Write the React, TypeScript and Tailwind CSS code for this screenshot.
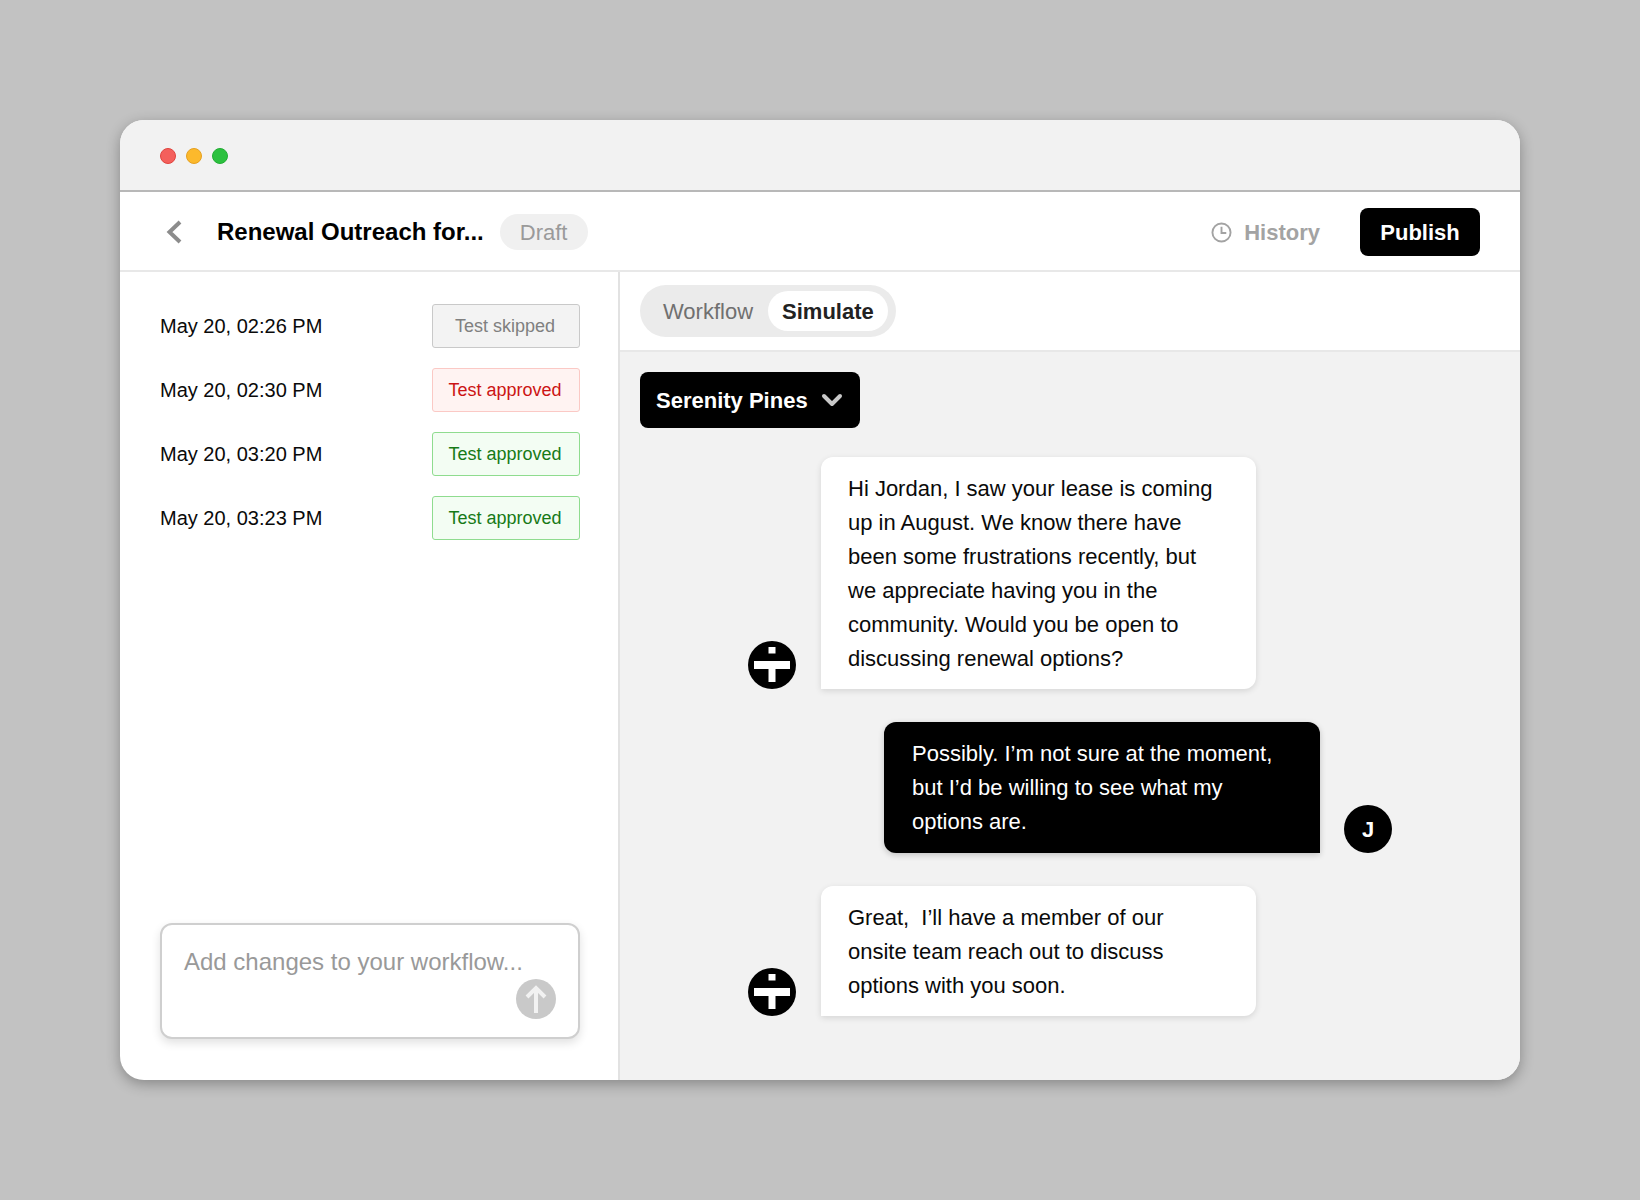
import { ChevronDown } from 'lucide-react'

const ROWS = [
  { time: 'May 20, 02:26 PM', label: 'Test skipped', cls: 'bg-[#f3f3f3] border-[#c9c9c9] text-[#808080]' },
  { time: 'May 20, 02:30 PM', label: 'Test approved', cls: 'bg-[#fff3f2] border-[#fbc9c5] text-[#cc1414]' },
  { time: 'May 20, 03:20 PM', label: 'Test approved', cls: 'bg-[#f3fdf3] border-[#8fdc8f] text-[#177a17]' },
  { time: 'May 20, 03:23 PM', label: 'Test approved', cls: 'bg-[#f3fdf3] border-[#8fdc8f] text-[#177a17]' },
]

function BotAvatar() {
  return (
    <svg width="48" height="48" viewBox="0 0 48 48" className="shrink-0">
      <circle cx="24" cy="24" r="24" fill="#000" />
      <rect x="20.5" y="6" width="7" height="6.5" fill="#fff" />
      <rect x="6" y="20" width="36" height="8" fill="#fff" />
      <rect x="20.5" y="20" width="7" height="21" fill="#fff" />
    </svg>
  )
}

function BotMessage({ lines }: { lines: string[] }) {
  return (
    <div className="flex items-end gap-[25px]">
      <BotAvatar />
      <div className="w-[435px] bg-white rounded-t-xl rounded-br-xl pl-[27px] pr-5 pt-[15px] pb-[13px] text-[22px] leading-[34px] text-[#0a0a0a] shadow-[0_2px_6px_rgba(0,0,0,0.12)]">
        {lines.map(l => <div key={l} className="whitespace-pre">{l}</div>)}
      </div>
    </div>
  )
}

export default function App() {
  return (
    <div className="h-screen bg-[#c2c2c2] flex items-center justify-center [font-family:'Liberation_Sans',Arial,sans-serif]">
      <div className="w-[1400px] h-[960px] bg-white rounded-3xl overflow-hidden flex flex-col shadow-[0_4px_14px_rgba(0,0,0,0.3)]">
        {/* Title bar */}
        <div className="h-[72px] shrink-0 bg-[#f2f2f2] border-b-2 border-[#b8b8b8] flex items-center gap-[10px] pl-10 pt-[2px]">
          <span className="w-4 h-4 rounded-full bg-[#f4605c] border border-[#e0443e]" />
          <span className="w-4 h-4 rounded-full bg-[#fcb92c] border border-[#e6a020]" />
          <span className="w-4 h-4 rounded-full bg-[#2cc13f] border border-[#22ad34]" />
        </div>

        {/* Header */}
        <div className="h-[80px] shrink-0 border-b-2 border-[#e8e8e8] flex items-center pl-10 pr-10 pt-[2px]">
          <svg width="16" height="24" viewBox="0 0 16 24" fill="none" stroke="#8c8c8c" strokeWidth="4" className="ml-[6px]">
            <path d="M14 2L3.5 12 14 22" />
          </svg>
          <span className="ml-[35px] text-[24px] font-bold text-[#000]">Renewal Outreach for...</span>
          <span className="ml-4 h-9 pl-5 pr-[21px] rounded-full bg-[#f0f0f0] text-[22px] text-[#9a9a9a] flex items-center">Draft</span>
          <div className="ml-auto flex items-center">
            <svg width="21" height="21" viewBox="0 0 22 22" fill="none" stroke="#a3a3a3" strokeWidth="2">
              <circle cx="11" cy="11" r="9.5" />
              <path d="M11 5v6.5h5" />
            </svg>
            <span className="ml-3 text-[22px] font-bold text-[#a3a3a3]">History</span>
            <button className="ml-10 w-[120px] h-12 bg-black rounded-lg text-white text-[22px] font-bold">Publish</button>
          </div>
        </div>

        <div className="flex-1 flex min-h-0">
          {/* Left column */}
          <div className="w-[500px] shrink-0 border-r-2 border-[#e2e2e2] flex flex-col justify-between pt-8 pb-[41px] pl-10 pr-[38px]">
            <div className="flex flex-col gap-5">
              {ROWS.map(r => (
                <div key={r.time} className="flex items-center justify-between">
                  <span className="text-[20px] text-[#0a0a0a]">{r.time}</span>
                  <span className={`w-[148px] h-11 rounded-[3px] border pr-[2px] text-[18px] flex items-center justify-center ${r.cls}`}>{r.label}</span>
                </div>
              ))}
            </div>
            <div className="h-[116px] rounded-xl border-2 border-[#cfcfcf] shadow-[0_4px_10px_rgba(0,0,0,0.12)] bg-white pl-[22px] pr-[22px] pt-[23px] relative">
              <div className="text-[24px] leading-7 text-[#999]">Add changes to your workflow...</div>
              <div className="absolute right-[22px] bottom-[18px] w-10 h-10 rounded-full bg-[#c9c9c9] flex items-center justify-center">
                <svg width="24" height="30" viewBox="0 0 24 30" fill="none" stroke="#f2f2f2" strokeWidth="4">
                  <path d="M12 29V4" />
                  <path d="M3 13L12 4l9 9" />
                </svg>
              </div>
            </div>
          </div>

          {/* Right column */}
          <div className="flex-1 flex flex-col min-w-0">
            <div className="h-[80px] shrink-0 border-b-2 border-[#e8e8e8] pl-5 flex items-center">
              <div className="h-[52px] w-[256px] rounded-full bg-[#ebebeb] flex items-center pl-[23px]">
                <span className="text-[22px] text-[#707070]">Workflow</span>
                <span className="ml-[15px] h-10 px-[14px] rounded-full bg-white text-[22px] font-bold text-[#222] flex items-center">Simulate</span>
              </div>
            </div>
            <div className="flex-1 bg-[#f2f2f2] pl-5 pt-[20px]">
              <button className="w-[220px] h-14 bg-black rounded-lg flex items-center pl-4 text-white text-[22px] font-bold">
                Serenity Pines
                <ChevronDown className="ml-[8px] w-8 h-8 text-[#c8c8c8]" strokeWidth={3} />
              </button>
              <div className="ml-[108px] w-[644px] mt-[29px] flex flex-col gap-[33px]">
                <BotMessage lines={[
                  'Hi Jordan, I saw your lease is coming',
                  'up in August. We know there have',
                  'been some frustrations recently, but',
                  'we appreciate having you in the',
                  'community. Would you be open to',
                  'discussing renewal options?',
                ]} />
                <div className="flex items-end justify-end gap-6">
                  <div className="w-[436px] bg-black rounded-t-xl rounded-bl-xl px-7 pt-[15px] pb-[14px] text-[22px] leading-[34px] text-white shadow-[0_2px_6px_rgba(0,0,0,0.2)]">
                    <div>Possibly. I’m not sure at the moment,</div>
                    <div>but I’d be willing to see what my</div>
                    <div>options are.</div>
                  </div>
                  <div className="w-12 h-12 shrink-0 rounded-full bg-black text-white text-[22px] font-bold flex items-center justify-center">J</div>
                </div>
                <BotMessage lines={[
                  'Great,  I’ll have a member of our',
                  'onsite team reach out to discuss',
                  'options with you soon.',
                ]} />
              </div>
            </div>
          </div>
        </div>
      </div>
    </div>
  )
}
